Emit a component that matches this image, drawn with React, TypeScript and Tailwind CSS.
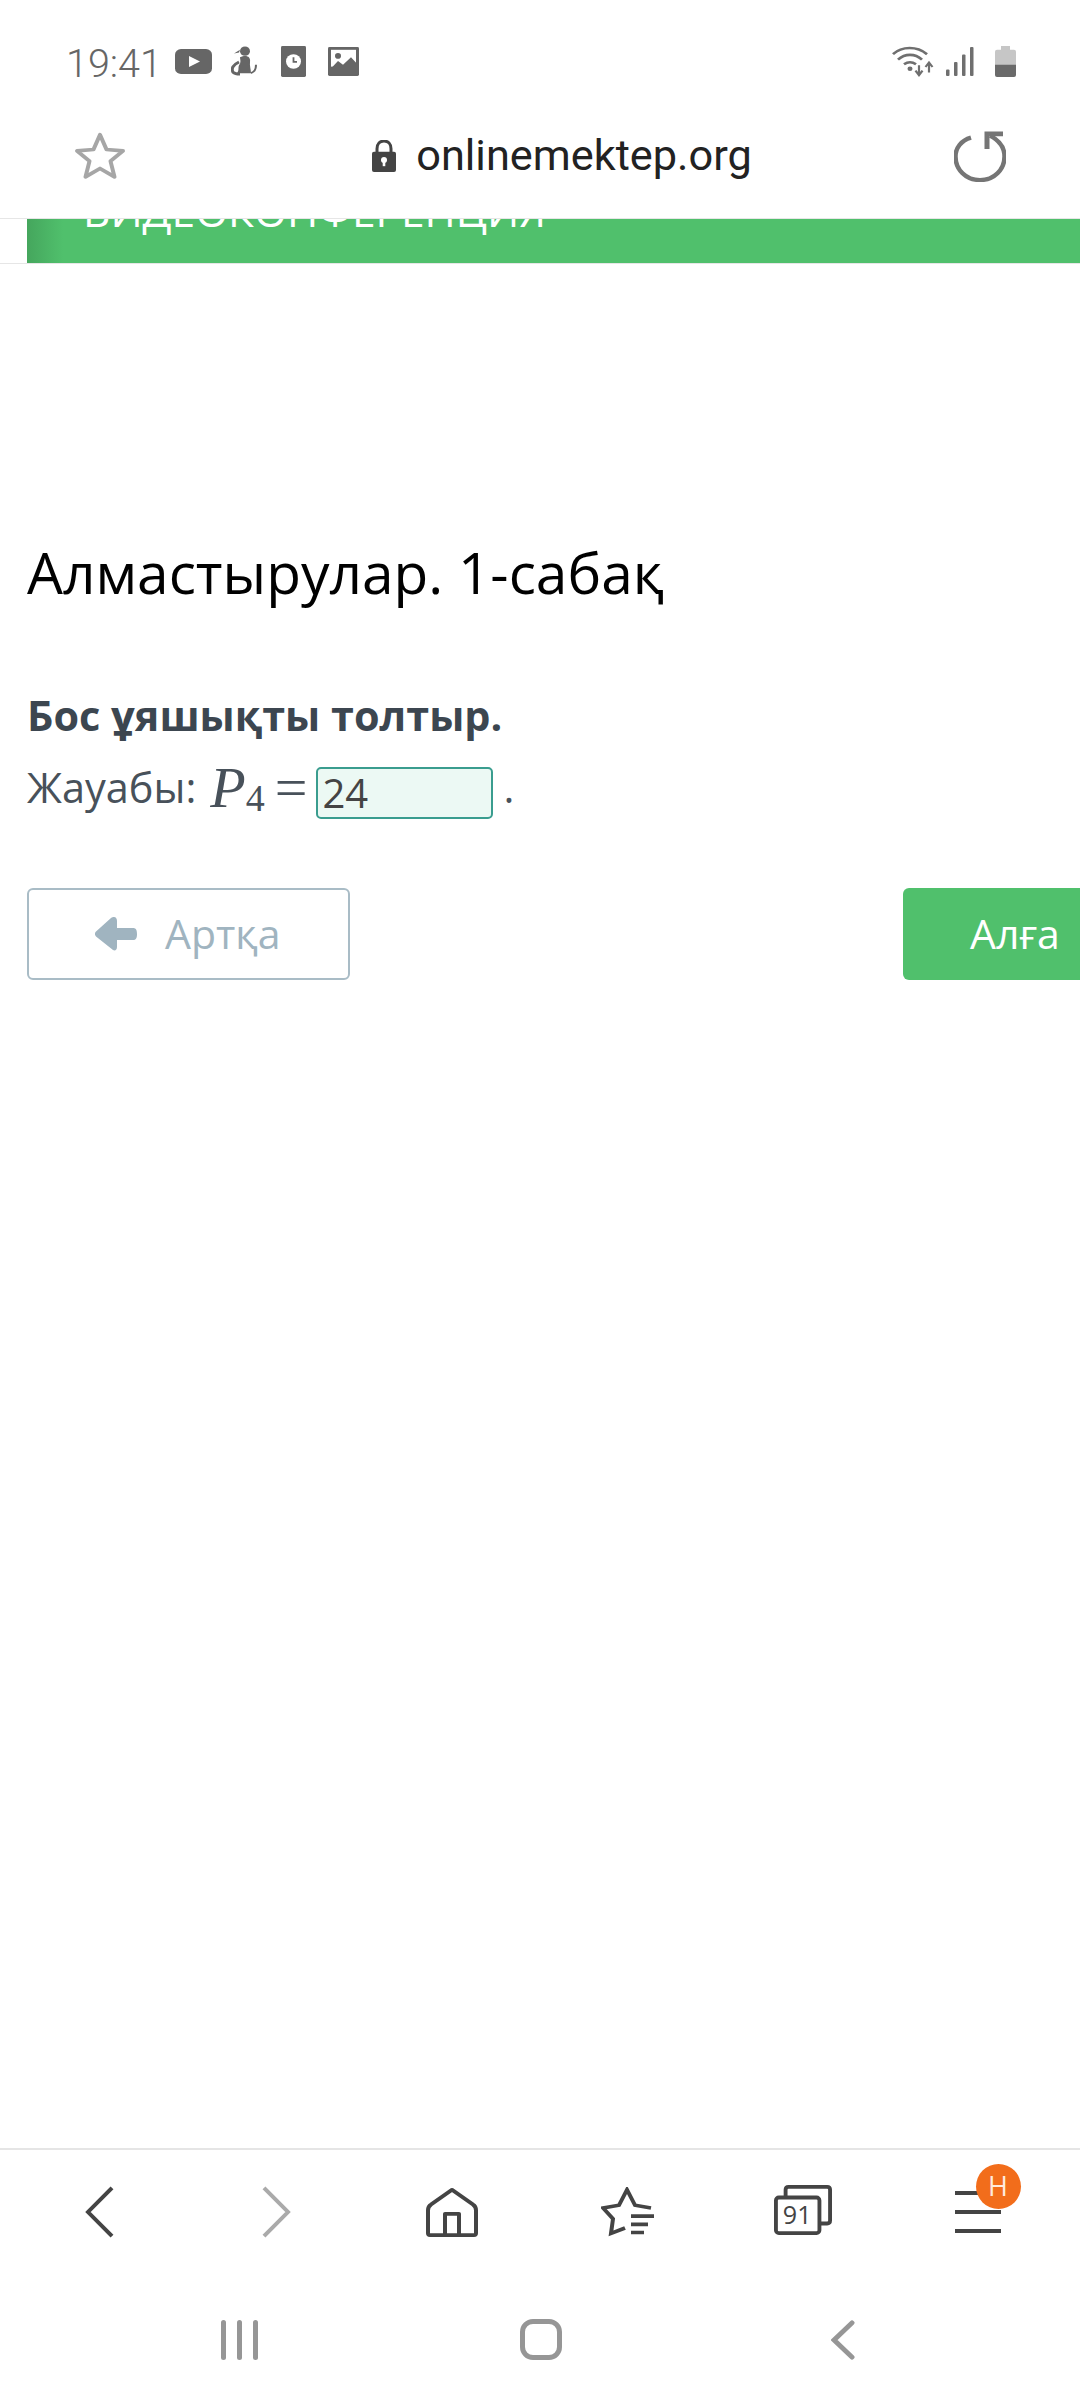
const openSans = { fontFamily: '"Open Sans", "Noto Sans", sans-serif' };
const mathFont = { fontFamily: '"Liberation Serif", serif' };

const StatusIcons = () => (
  <div className="flex items-center">
    <svg width="37" height="25" viewBox="0 0 37 27" preserveAspectRatio="none" className="mr-[19px]">
      <rect width="37" height="27" rx="6" fill="#666" />
      <path d="M14 7.500 L25 13.500 L14 19.500 Z" fill="#fff" />
    </svg>
    <svg width="26" height="30" viewBox="0 0 26 32" preserveAspectRatio="none" className="mr-[24px]">
      <circle cx="14" cy="5.500" r="5" fill="#666" />
      <path d="M9 4 L3 8 L8 7 Z" fill="#666" />
      <path d="M9 12 C15 9 20 11 19 17 C18.500 21 20 25 20 29 L6 29 C9 25 6 23 9 19 C10 16 9 14 9 12 Z" fill="#666" />
      <path d="M8 17 C2 20 0 24 2 28 C4 30 7 30 9 30" fill="none" stroke="#666" strokeWidth="3" />
      <path d="M20 29 C23 28 25 25 25 20" fill="none" stroke="#666" strokeWidth="2" />
    </svg>
    <svg width="25" height="31" viewBox="0 0 25 32" preserveAspectRatio="none" className="mr-[22px]">
      <rect width="25" height="32" rx="1.500" fill="#666" />
      <circle cx="12.500" cy="16" r="7.500" fill="#fff" />
      <path d="M12.500 11.500 V16.500 H16" fill="none" stroke="#666" strokeWidth="1.800" />
    </svg>
    <svg width="31" height="29" viewBox="0 0 31 31" preserveAspectRatio="none">
      <rect width="31" height="31" rx="1.500" fill="#666" />
      <rect x="3" y="3" width="25" height="18" fill="#fff" />
      <circle cx="10" cy="9.500" r="3" fill="#666" />
      <path d="M2 24 L10 15 L15 19 L23 11 L29 18 V29 H2 Z" fill="#666" />
    </svg>
  </div>
);

const SignalIcons = () => (
  <div className="flex items-center">
    <svg width="43" height="31" viewBox="0 0 43 34" preserveAspectRatio="none" fill="none" className="mr-[11px]">
      <path d="M1 9 C10 0 25 0 35 9" stroke="#6f6f6f" strokeWidth="2.800" />
      <path d="M6 15 C13 8 23 8 30 15" stroke="#6f6f6f" strokeWidth="2.800" />
      <path d="M12 20 C16 17 20 17 24 20" stroke="#6f6f6f" strokeWidth="2.800" />
      <circle cx="18" cy="25" r="2.500" fill="#6f6f6f" />
      <path d="M27 21 V31 M23.500 27 L27 32 L30.500 27" stroke="#6f6f6f" strokeWidth="2.200" />
      <path d="M37 29 V19 M33.500 23 L37 18 L40.500 23" stroke="#6f6f6f" strokeWidth="2.200" />
    </svg>
    <svg width="28" height="29" viewBox="0 0 28 31" preserveAspectRatio="none" className="mr-[21px]">
      <rect x="0" y="24" width="3.500" height="7" rx="1" fill="#6f6f6f" />
      <rect x="8" y="16" width="3.500" height="15" rx="1" fill="#6f6f6f" />
      <rect x="16" y="8" width="3.500" height="23" rx="1" fill="#6f6f6f" />
      <rect x="24" y="0" width="3.500" height="31" rx="1" fill="#6f6f6f" />
    </svg>
    <svg width="21" height="31" viewBox="0 0 21 33" preserveAspectRatio="none">
      <path d="M6 0 H15 V4 H19 Q21 4 21 6 V21 H0 V6 Q0 4 2 4 H6 Z" fill="#c6c6c6" />
      <path d="M0 20 H21 V31 Q21 33 19 33 H2 Q0 33 0 31 Z" fill="#6a6a6a" />
    </svg>
  </div>
);

const BackArrow = () => (
  <svg width="42" height="34" viewBox="0 0 42 34" className="mr-[28px]">
    <path d="M19 0 C21 0 22 2 22 4 V11 H38 C41 11 42 13 42 17 C42 21 41 23 38 23 H22 V30 C22 33 20 34 18 33 L1 19.500 C-0.500 18 -0.500 16 1 14.500 L16 1 C17 0 18 0 19 0 Z" fill="#a0b4c0" />
  </svg>
);

const App = () => {
  return (
    <div className="flex h-[2400px] w-[1080px] flex-col overflow-hidden bg-white" style={openSans}>
      {/* Status bar */}
      <div className="flex h-[122px] items-center justify-between pl-[66px] pr-[64px]">
        <div className="flex items-center gap-[13px]">
          <span className="mt-[5px] text-[39.5px] leading-none font-light text-[#666]" style={{ fontFamily: "Roboto, sans-serif" }}>19:41</span>
          <StatusIcons />
        </div>
        <SignalIcons />
      </div>

      {/* Browser url bar */}
      <div className="flex h-[96px] items-center justify-between px-[74px] pb-[28px]">
        <svg width="52" height="50" viewBox="0 0 52 54" preserveAspectRatio="none" fill="none">
          <path d="M26 4 L32.500 20 L49 21.500 L36.500 32.500 L40.500 49.500 L26 40.500 L11.500 49.500 L15.500 32.500 L3 21.500 L19.500 20 Z" stroke="#a6a6a6" strokeWidth="4" strokeLinejoin="round" />
        </svg>
        <div className="ml-[44px] flex items-center gap-[20px]">
          <svg width="24" height="32" viewBox="0 0 24 33" preserveAspectRatio="none">
            <path d="M5 13 V9 C5 4 8 1 12 1 C16 1 19 4 19 9 V13" fill="none" stroke="#444" strokeWidth="3" />
            <rect y="12" width="24" height="21" rx="2" fill="#444" />
            <circle cx="12" cy="20.500" r="3" fill="#fff" />
            <rect x="10.700" y="21" width="2.600" height="6" fill="#fff" />
          </svg>
          <span className="text-[43.3px] leading-none text-[#222]" style={{ fontFamily: "Roboto, sans-serif" }}>onlinemektep.org</span>
        </div>
        <svg width="52" height="51" viewBox="0 0 52 54" preserveAspectRatio="none" fill="none">
          <path d="M17 7 C7 10 1.500 18 1.500 27 C1.500 41 12 52 26 52 C40 52 50.500 41 50.500 27 C50.500 18 45 10 36 5" stroke="#757575" strokeWidth="4.500" />
          <path d="M33 19 V3 H49" stroke="#757575" strokeWidth="5" />
        </svg>
      </div>

      {/* Page content */}
      <div className="flex-1">
        <div className="flex h-[46px] overflow-hidden border-y border-[#e6e6e6]">
          <div className="ml-[27px] flex-1 overflow-hidden bg-[linear-gradient(to_right,#45a65d,#50c06c_36px)] pl-[56px] text-[42.4px] leading-none text-white">
            <div className="mt-[-29px]">ВИДЕОКОНФЕРЕНЦИЯ</div>
          </div>
        </div>
        <div className="px-[27px]">
          <h1 className="mt-[270px] text-[56.8px] leading-[76px] text-black">Алмастырулар. 1-сабақ</h1>
          <p className="mt-[77px] text-[41.4px] leading-[56px] font-bold text-[#3c4650]">Бос ұяшықты толтыр.</p>
          <div className="mt-[16px] flex h-[56px] items-center text-[41.5px] text-[#48515a]">
            <span>Жауабы:</span>
            <span className="ml-[14px] text-[58px] italic" style={mathFont}>P</span>
            <span className="mt-[22px] text-[38px]" style={mathFont}>4</span>
            <span className="ml-[10px] text-[58px]" style={mathFont}>=</span>
            <div className="ml-[9px] mt-[12px] flex h-[52px] w-[177px] items-center rounded-[5px] border-2 border-[#3a9d8f] bg-[#ecf9f4] pl-[4px] text-[40px] text-[#444]">24</div>
            <span className="ml-[10px]">.</span>
          </div>
          <div className="mt-[73px] flex justify-between">
            <button className="flex h-[92px] w-[323px] items-center rounded-[6px] border-2 border-[#a9bcc6] pl-[66px] text-[41px] text-[#a0b4c0]">
              <BackArrow />
              Артқа
            </button>
            <button className="mr-[-27px] flex h-[92px] w-[177px] items-center rounded-l-[6px] bg-[#50c06c] pl-[67px] text-[41px] text-white">Алға</button>
          </div>
        </div>
      </div>

      {/* Bottom toolbar */}
      <div className="h-[252px] border-t-2 border-[#e5e5e5]">
        <div className="grid h-[124px] grid-cols-[repeat(6,176px)] place-items-center pl-[12px]">
          <svg width="30" height="52" viewBox="0 0 30 54" preserveAspectRatio="none" fill="none">
            <path d="M27 2 L3 27 L27 52" stroke="#444" strokeWidth="4" />
          </svg>
          <svg width="30" height="52" viewBox="0 0 30 54" preserveAspectRatio="none" fill="none">
            <path d="M3 2 L27 27 L3 52" stroke="#aaa" strokeWidth="4" />
          </svg>
          <svg width="52" height="50" viewBox="0 0 52 54" preserveAspectRatio="none" fill="none" stroke="#444" strokeWidth="4" strokeLinejoin="round">
            <path d="M26 3 L47 19 Q50 21 50 25 V50 Q50 52 48 52 H4 Q2 52 2 50 V25 Q2 21 5 19 Z" />
            <path d="M19 52 V29 H33 V52" />
          </svg>
          <svg width="54" height="51" viewBox="0 0 54 56" preserveAspectRatio="none" fill="none" stroke="#444">
            <path d="M50 23 L34 20 L26 3 L18 20 L2 23 L12 35 L10 51 L24 45" strokeWidth="4" />
            <path d="M30 32 H53 M30 41 H47 M30 50 H43" strokeWidth="4" />
          </svg>
          <svg width="58" height="50" viewBox="0 0 60 52" preserveAspectRatio="none" fill="none" stroke="#444" strokeWidth="4" className="mb-[5px] mr-[3px]">
            <path d="M12 12 V5 Q12 2 15 2 H55 Q58 2 58 5 V37 Q58 40 55 40 H47" />
            <rect x="2" y="13" width="45" height="37" rx="3" />
            <text x="24" y="41" textAnchor="middle" fontSize="26" fill="#444" stroke="none" style={{ fontFamily: '"Open Sans", sans-serif' }}>91</text>
          </svg>
          <div className="relative mr-[5px] flex w-[46px] flex-col gap-[15px]">
            <div className="h-[4px] bg-[#444]" />
            <div className="h-[4px] bg-[#444]" />
            <div className="h-[4px] bg-[#444]" />
            <span className="absolute left-[21px] top-[-27px] flex h-[45px] w-[45px] items-center justify-center rounded-full bg-[#f26d1b] text-[27px] text-[#ffeadd]">H</span>
          </div>
        </div>
        <div className="grid grid-cols-[repeat(3,302px)] place-items-center pl-[88px] pt-[45px]">
          <div className="flex gap-[11px]">
            <div className="h-[40px] w-[5px] rounded-full bg-[#969696]" />
            <div className="h-[40px] w-[5px] rounded-full bg-[#969696]" />
            <div className="h-[40px] w-[5px] rounded-full bg-[#969696]" />
          </div>
          <div className="h-[41px] w-[42px] rounded-[13px] border-[5px] border-[#969696]" />
          <svg width="24" height="40" viewBox="0 0 24 42" preserveAspectRatio="none" fill="none">
            <path d="M21 3 L3 21 L21 39" stroke="#969696" strokeWidth="5" strokeLinecap="round" />
          </svg>
        </div>
      </div>
    </div>
  );
};

export default App;
